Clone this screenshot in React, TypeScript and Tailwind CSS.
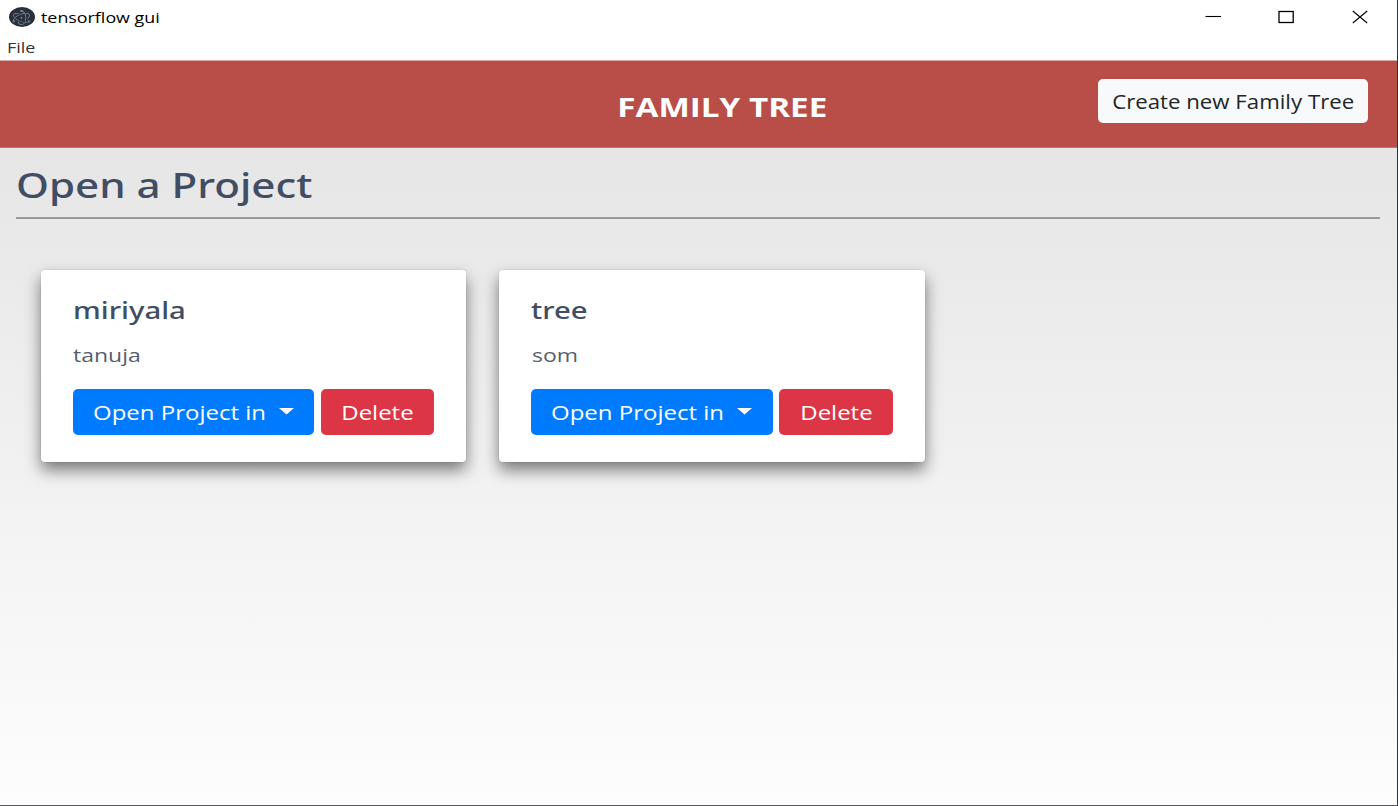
import type { ReactNode } from "react";
import { SiElectron } from "react-icons/si";

function ElectronIcon() {
  return (
    <span className="-mt-px flex h-5 w-[26px] items-center justify-center rounded-[50%] bg-[#2b2e3b] text-[#9fc6d0]">
      <SiElectron className="h-[15px] w-[15px] scale-x-[1.27]" />
    </span>
  );
}

function TitleBar() {
  return (
    <div className="flex h-[35px] items-center pl-[8.5px]">
      <ElectronIcon />
      <span className="ml-[6px] origin-left scale-x-[1.275] text-[14px] leading-[34px] whitespace-nowrap text-black">
        tensorflow gui
      </span>
      <div className="-mt-[2px] ml-auto flex items-center pr-[29px] text-black">
        <svg width="16" height="14" viewBox="0 0 16 14" className="mr-[57px]">
          <path d="M0.5 6.5H16" stroke="currentColor" strokeWidth="1.1" />
        </svg>
        <svg width="16" height="14" viewBox="0 0 16 14" className="mr-[58px]" fill="none">
          <rect x="1" y="1.5" width="14.2" height="11" stroke="currentColor" strokeWidth="1.3" />
        </svg>
        <svg width="16" height="14" viewBox="0 0 16 14">
          <path d="M0.8 1L15.2 13M15.2 1L0.8 13" stroke="currentColor" strokeWidth="1.1" />
        </svg>
      </div>
    </div>
  );
}

function CardButton({ className, children }: { className: string; children: ReactNode }) {
  return (
    <button className={`flex h-[46px] items-center rounded-[5px] pt-[2px] text-[19.5px] text-white ${className}`}>
      {children}
    </button>
  );
}

function ProjectCard({ name, description }: { name: string; description: string }) {
  return (
    <article className="h-[192px] w-[425.5px] rounded-[4px] bg-white px-8 shadow-[0_0_0_1px_rgba(0,0,0,0.04),0_8px_16px_0_rgba(0,0,0,0.5)]">
      <h2 className="mt-[20px] w-fit origin-left scale-x-[1.22] font-['Noto_Sans',sans-serif] text-[24px] leading-[40px] font-medium text-[#414d63]">
        {name}
      </h2>
      <p className="mt-[11px] ml-[0.5px] w-fit origin-left scale-x-[1.21] text-[19px] leading-[28px] text-[#56606f]">
        {description}
      </p>
      <div className="mt-[20px] flex gap-[6.5px]">
        <CardButton className="w-[241.5px] bg-[#007bff] pl-5">
          <span className="w-[186px] text-left">
            <span className="inline-block origin-left scale-x-[1.23] whitespace-nowrap">Open Project in</span>
          </span>
          <svg width="15" height="7" viewBox="0 0 15 7" className="-mt-[3px]">
            <path d="M0 0H15L7.5 6.5Z" fill="white" />
          </svg>
        </CardButton>
        <CardButton className="w-[113.5px] justify-center bg-[#dc3545] pl-px">
          <span className="scale-x-[1.23]">Delete</span>
        </CardButton>
      </div>
    </article>
  );
}

export default function App() {
  return (
    <div className="flex h-[806px] w-[1398px] flex-col border-r border-b border-r-[#243640] border-b-[#55555b] bg-white font-['Open_Sans',sans-serif]">
      <TitleBar />
      <nav className="flex h-[25px] items-center pt-px pl-[7px]">
        <span className="origin-left scale-x-[1.28] text-[14px] leading-6 text-[#333]">File</span>
      </nav>
      <header className="grid h-[88px] grid-cols-[270.5px_1fr_270.5px] border-t border-b border-t-[#dca6a4] border-b-[#c9736f] bg-[#b94d48] pr-[29px]">
        <h1 className="col-start-2 mt-[25.5px] ml-[77px] h-10 scale-x-[1.23] justify-self-center text-[27px] leading-10 font-bold whitespace-nowrap text-white">
          FAMILY TREE
        </h1>
        <button className="mt-[18px] flex h-11 w-[270.5px] items-center justify-center rounded-[5px] bg-[#f8f9fa] pt-[2px] text-[19.5px] text-[#212529]">
          <span className="scale-x-[1.14] whitespace-nowrap">Create new Family Tree</span>
        </button>
      </header>
      <main className="flex-1 bg-gradient-to-b from-[#e6e6e6] to-[#fdfdfd] pr-[17px] pl-4">
        <h1 className="mt-[11.5px] w-fit origin-left scale-x-[1.238] font-['Noto_Sans',sans-serif] text-[34px] leading-[51px] font-medium text-[#414d63]">
          Open a Project
        </h1>
        <hr className="mt-[6.5px] border-t-2 border-[#999]" />
        <section className="mt-[51px] ml-[24.5px] flex gap-[33px]">
          <ProjectCard name="miriyala" description="tanuja" />
          <ProjectCard name="tree" description="som" />
        </section>
      </main>
    </div>
  );
}
